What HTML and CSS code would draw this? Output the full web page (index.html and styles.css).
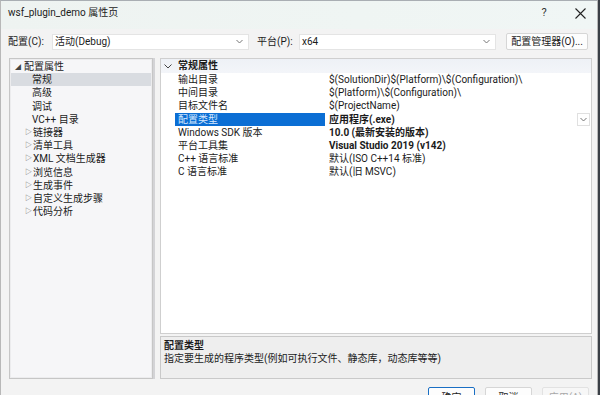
FILE: index.html
```html
<!DOCTYPE html>
<html lang="zh-CN">
<head>
<meta charset="utf-8">
<title>wsf_plugin_demo 属性页</title>
<link rel="stylesheet" href="styles.css">
</head>
<body>
<div class="win">
  <div class="titlebar">
    <span class="title">wsf_plugin_demo 属性页</span>
    <span class="help">?</span>
    <span class="close"><svg width="11" height="11" viewBox="0 0 11 11"><path d="M0.5 0.5L10.5 10.5M10.5 0.5L0.5 10.5" stroke="#222" stroke-width="1.1" fill="none"/></svg></span>
  </div>
  <div class="config-row">
    <span class="lbl">配置(C):</span>
    <div class="select sel-config"><span>活动(Debug)</span><svg class="chev" width="7" height="5" viewBox="0 0 7 5"><path d="M0.5 1L3.5 4L6.5 1" stroke="#777" fill="none"/></svg></div>
    <span class="lbl lbl-plat">平台(P):</span>
    <div class="select sel-plat"><span>x64</span><svg class="chev" width="7" height="5" viewBox="0 0 7 5"><path d="M0.5 1L3.5 4L6.5 1" stroke="#777" fill="none"/></svg></div>
    <div class="btn btn-mgr">配置管理器(O)...</div>
  </div>
  <div class="main">
    <div class="tree">
      <div class="node root"><span class="tri-open">◢</span>配置属性</div>
      <div class="node leaf sel">常规</div>
      <div class="node leaf">高级</div>
      <div class="node leaf">调试</div>
      <div class="node leaf">VC++ 目录</div>
      <div class="node branch"><span class="tri">▷</span>链接器</div>
      <div class="node branch"><span class="tri">▷</span>清单工具</div>
      <div class="node branch"><span class="tri">▷</span>XML 文档生成器</div>
      <div class="node branch"><span class="tri">▷</span>浏览信息</div>
      <div class="node branch"><span class="tri">▷</span>生成事件</div>
      <div class="node branch"><span class="tri">▷</span>自定义生成步骤</div>
      <div class="node branch"><span class="tri">▷</span>代码分析</div>
    </div>
    <div class="splitter"></div>
    <div class="right">
      <div class="grid">
        <div class="cat"><svg class="cat-chev" width="8" height="5" viewBox="0 0 8 5"><path d="M0.5 0.5L4 4L7.5 0.5" stroke="#444" fill="none"/></svg><span>常规属性</span></div>
        <div class="row"><span class="name">输出目录</span><span class="val">$(SolutionDir)$(Platform)\$(Configuration)\</span></div>
        <div class="row"><span class="name">中间目录</span><span class="val">$(Platform)\$(Configuration)\</span></div>
        <div class="row"><span class="name">目标文件名</span><span class="val">$(ProjectName)</span></div>
        <div class="row active"><span class="name">配置类型</span><span class="val bold">应用程序(.exe)</span><span class="dd"><svg width="7" height="5" viewBox="0 0 7 5"><path d="M0.5 1L3.5 4L6.5 1" stroke="#777" fill="none"/></svg></span></div>
        <div class="row"><span class="name">Windows SDK 版本</span><span class="val bold">10.0 (最新安装的版本)</span></div>
        <div class="row"><span class="name">平台工具集</span><span class="val bold">Visual Studio 2019 (v142)</span></div>
        <div class="row"><span class="name">C++ 语言标准</span><span class="val">默认(ISO C++14 标准)</span></div>
        <div class="row"><span class="name">C 语言标准</span><span class="val">默认(旧 MSVC)</span></div>
      </div>
      <div class="desc">
        <div class="desc-title">配置类型</div>
        <div class="desc-text">指定要生成的程序类型(例如可执行文件、静态库，动态库等等)</div>
      </div>
    </div>
  </div>
  <div class="buttons">
    <div class="btn btn-bottom default">确定</div>
    <div class="btn btn-bottom">取消</div>
    <div class="btn btn-bottom disabled">应用(A)</div>
  </div>
</div>
</body>
</html>
```

FILE: styles.css
```css
html, body {
  margin: 0;
  padding: 0;
  width: 600px;
  height: 395px;
  overflow: hidden;
  background: #3a3f46;
}
.win {
  width: 598px;
  height: 410px;
  background: #f3f3f3;
  border-top: 1px solid #a9aeb3;
  border-left: 1px solid #b8b8b8;
  border-right: 1px solid #b8b8b8;
  box-sizing: border-box;
  font-family: "Roboto", "Noto Sans CJK SC", sans-serif;
  font-size: 10px;
  color: #1b1b1b;
  display: flex;
  flex-direction: column;
}
.titlebar {
  height: 28px;
  display: flex;
  align-items: center;
  padding: 0 0 4px 7px;
  box-sizing: border-box;
  background: linear-gradient(90deg, #eef3f1, #eff5f3 60%, #f0f6f5);
}
.title {
  flex: 1;
  font-size: 10px;
  line-height: 14px;
}
.help {
  width: 12px;
  font-size: 11px;
  line-height: 14px;
  color: #333;
  margin-right: 25px;
  text-align: center;
}
.close {
  width: 11px;
  height: 11px;
  margin-right: 11px;
  display: flex;
}
.config-row {
  display: flex;
  align-items: center;
  padding: 4px 0 0 7px;
  height: 17px;
}
.lbl {
  width: 44px;
  line-height: 16px;
}
.lbl-plat {
  margin-left: 8px;
  width: 42px;
}
.select {
  height: 16px;
  box-sizing: border-box;
  background: #fff;
  border: 1px solid #e4e4e4;
  display: flex;
  align-items: center;
  justify-content: space-between;
  padding: 0 5px 0 2px;
  line-height: 14px;
}
.sel-config { width: 197px; }
.sel-plat { width: 197px; }
.chev { flex: none; }
.btn {
  box-sizing: border-box;
  background: #fdfdfd;
  border: 1px solid #d6d6d6;
  border-radius: 2px;
  display: flex;
  align-items: center;
  justify-content: center;
  line-height: 14px;
}
.btn-mgr {
  margin-left: 10px;
  width: 82px;
  height: 17px;
}
.main {
  display: flex;
  padding: 8px 0 0 8px;
  height: 321px;
  box-sizing: content-box;
}
.tree {
  width: 144px;
  height: 321px;
  box-sizing: border-box;
  background: #f6f6f8;
  border: 1px solid #c6c6c6;
  box-shadow: inset 0 0 0 1px #ececee;
  padding: 1px 1px 0 1px;
}
.node {
  height: 13.2px;
  line-height: 13.2px;
  white-space: nowrap;
  display: flex;
  align-items: center;
}
.root { padding-left: 4px; }
.tri-open {
  font-size: 6px;
  width: 8px;
  color: #444;
  margin-right: 1px;
}
.leaf { padding-left: 21px; }
.sel { background: #d9dce1; }
.branch { padding-left: 14px; }
.tri {
  font-size: 7px;
  width: 8px;
  color: #666;
}
.splitter {
  width: 7px;
  box-sizing: border-box;
  border-left: 2px solid #d3d3d6;
}
.right {
  width: 432px;
  display: flex;
  flex-direction: column;
}
.grid {
  height: 276px;
  box-sizing: border-box;
  background: #fff;
  border: 1px solid #cfcfcf;
}
.cat {
  height: 14px;
  display: flex;
  align-items: center;
  background: linear-gradient(#eef1f6, #f3f5f9);
  font-weight: bold;
  line-height: 14px;
}
.cat-chev {
  margin: 0 6px 0 3px;
}
.row {
  height: 13.2px;
  line-height: 13.2px;
  display: flex;
  align-items: center;
  position: relative;
  white-space: nowrap;
}
.name {
  width: 150px;
  margin-left: 14px;
  padding-left: 3px;
  box-sizing: border-box;
  height: 13.2px;
}
.val {
  padding-left: 4px;
}
.bold { font-weight: bold; }
.active .name {
  background: #0b6ed4;
  color: #d6e9ff;
}
.dd {
  position: absolute;
  right: 1px;
  top: 0;
  width: 13px;
  height: 13px;
  box-sizing: border-box;
  border: 1px solid #e0e0e0;
  background: #fff;
  display: flex;
  align-items: center;
  justify-content: center;
}
.desc {
  margin-top: 2px;
  height: 43px;
  box-sizing: border-box;
  background: #eeeeee;
  border: 1px solid #c9c9c9;
  padding: 2px 3px;
}
.desc-title {
  font-weight: bold;
  line-height: 13px;
}
.desc-text {
  line-height: 13px;
}
.buttons {
  display: flex;
  justify-content: flex-end;
  gap: 10px;
  padding: 8px 8px 0 0;
}
.btn-bottom {
  width: 47px;
  height: 20px;
  align-items: flex-start;
  padding-top: 3px;
}
.default {
  border: 1px solid #1a6fc4;
}
.disabled {
  color: #a8a8a8;
  background: #f7f7f7;
  border-color: #e2e2e2;
}
```
